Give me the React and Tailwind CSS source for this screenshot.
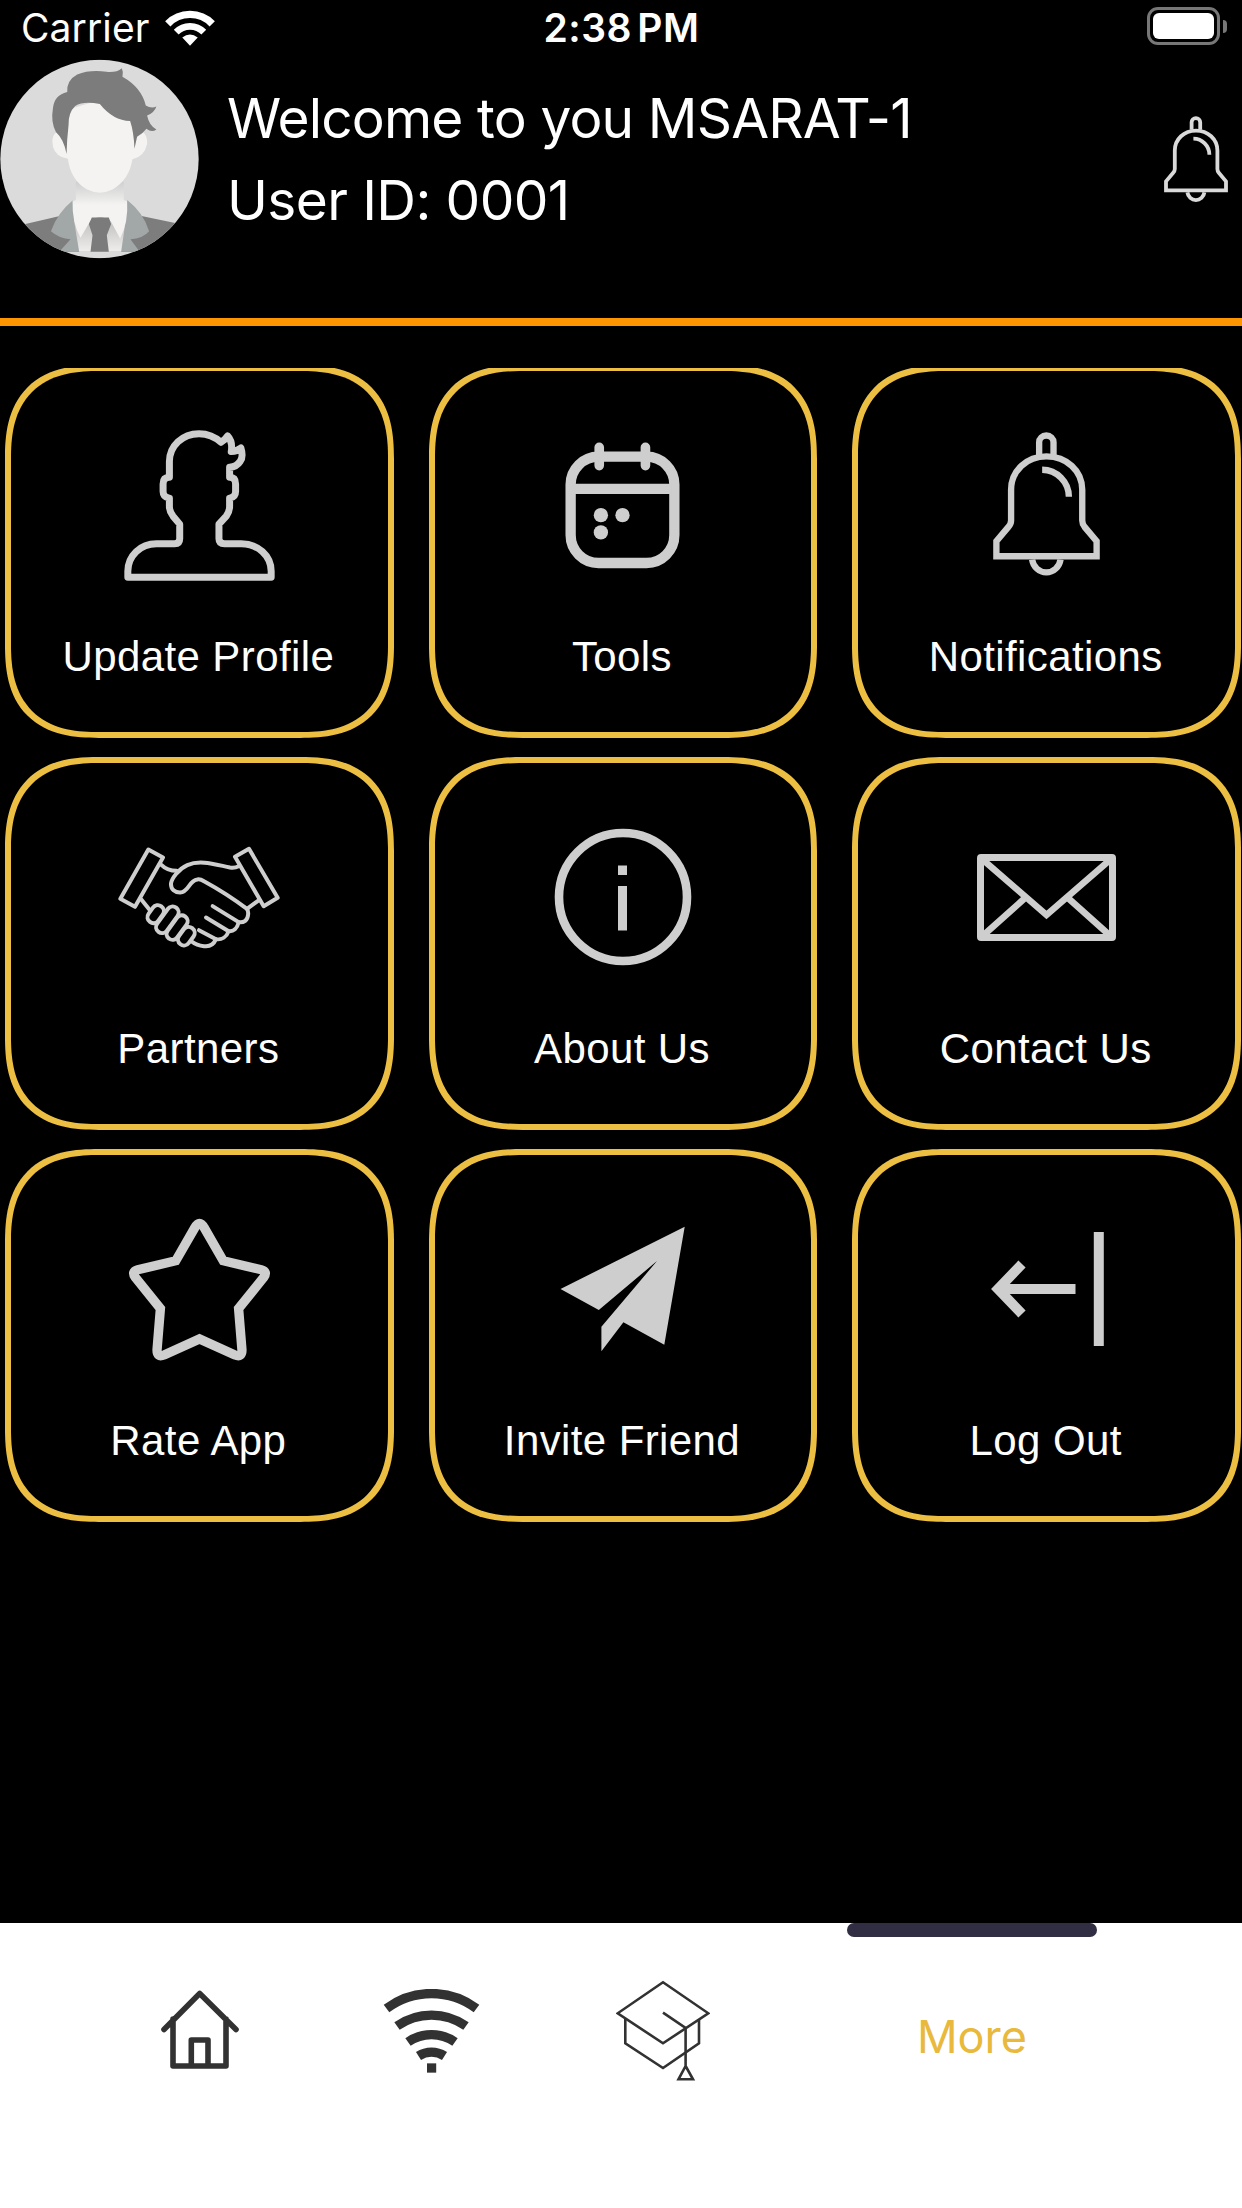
import React from "react";

const BellIcon = ({ className }) => (
  <svg viewBox="454 215 320 440" className={className} fill="none" stroke="currentColor" strokeWidth="19">
    <path d="M592 284V246a21 20 0 0 1 43 0v38" />
    <path d="M508 480V388C508 330 555 288 614 288S721 330 721 388v92q0 10 7 19l36 43v45H464v-45l36-43q8-9 8-19z" />
    <path d="M601 328c44 0 80 37 80 81" />
    <path d="M571 597a43 45 0 0 0 85 0" />
  </svg>
);

const ProfileIcon = () => (
  <svg viewBox="373 210 453 454" className="h-[151px] w-[151px]" fill="none" stroke="currentColor" strokeWidth="21" strokeLinejoin="round">
    <path d="M384 653V635C384 588 422 552 470 552H525Q540 552 540 537V493L520 469Q509 455 509 440V415Q490 412 490 395V372Q490 352 509 352V305C509 258 548 221 598 221C628 221 646 230 664 247Q676 240 684 228Q700 245 695 275Q712 274 724 264Q732 290 722 304Q711 321 690 322V352Q708 352 708 372V395Q708 412 690 415V440Q690 455 680 469L658 493V537Q658 552 675 552H725C775 552 815 588 815 635V653Z" />
  </svg>
);

const CalendarIcon = () => (
  <svg viewBox="436 244 344 382" className="h-[127px] w-[115px]" fill="none" stroke="currentColor" strokeWidth="31" strokeLinecap="round">
    <rect x="452" y="288" width="312" height="320" rx="84" />
    <path d="M460 385h296" strokeLinecap="butt" />
    <path d="M538 260v55M677 260v55" strokeWidth="29" />
    <g fill="currentColor" stroke="none">
      <circle cx="543" cy="464" r="21.5" />
      <circle cx="608" cy="464" r="21.5" />
      <circle cx="543" cy="516" r="21.5" />
    </g>
  </svg>
);

const HandshakeIcon = () => (
  <svg viewBox="354 288 486 308" className="h-[103px] w-[162px]" fill="none" stroke="currentColor" strokeWidth="12" strokeLinecap="round" strokeLinejoin="round">
    <path d="M445 298l44 24-84 148-44-24zM747 296l86 147-42 25-86-148z" />
    <path d="M484 344Q502 362 530 362M424 448L448 478M741 476L777 450" />
    <path d="M716 348Q705 354 690 352C645 343 600 328 562 345C535 357 515 385 513 400C512 418 525 427 540 427C568 425 565 392 592 388Q600 386 612 393Q680 430 741 476Q746 484 744 495C743 510 732 518 716 516C712 535 700 545 686 543C680 560 665 570 648 567C640 585 625 590 612 588Q590 586 575 574" />
    <path d="M716 516L638 468M686 543L618 502M648 567L597 540" />
    <rect x="449" y="463" width="36" height="58" rx="18" transform="rotate(36 467 492)" />
    <rect x="484" y="464" width="36" height="90" rx="18" transform="rotate(36 502 509)" />
    <rect x="514" y="491" width="35" height="82" rx="17" transform="rotate(36 531 532)" />
    <rect x="541" y="528" width="36" height="60" rx="18" transform="rotate(36 559 558)" />
  </svg>
);

const InfoIcon = () => (
  <svg viewBox="0 0 138 138" className="h-[138px] w-[138px]" fill="currentColor">
    <circle cx="69" cy="69" r="64" fill="none" stroke="currentColor" strokeWidth="8.6" />
    <rect x="64" y="37.5" width="9" height="9.5" />
    <rect x="64" y="58" width="9" height="44.5" />
  </svg>
);

const EnvelopeIcon = () => (
  <svg viewBox="0 0 139 87" className="h-[87px] w-[139px]" fill="none" stroke="currentColor" strokeWidth="7">
    <rect x="3.5" y="3.5" width="132" height="80" rx="0.5" />
    <path d="M5 5L69.5 61L134 5M5 82.5L48 44M134 82.5L91 44" strokeWidth="6.5" />
  </svg>
);

const StarIcon = () => (
  <svg viewBox="386 236 428 428" className="h-[143px] w-[143px]" fill="none" stroke="currentColor" strokeWidth="28">
    <path d="M586 265Q600 239 614 265L671 364L785 391Q805 396 792 414L717 507L727 630Q728 655 706 646L600 598L494 646Q472 655 473 630L483 507L408 414Q395 396 415 391L529 364Z" />
  </svg>
);

const PlaneIcon = () => (
  <svg viewBox="0 0 125 126" className="h-[126px] w-[125px]" fill="currentColor">
    <path d="M124.7 .7L.5 63l38.3 21L97 35 41.4 100.700v24.6l22-29 40.900 22.400z" />
  </svg>
);

const LogOutIcon = () => (
  <svg viewBox="0 0 114 114" className="h-[114px] w-[114px]" fill="none" stroke="currentColor" strokeWidth="10">
    <path d="M32 32L8 57l24 25M8 57h77.5M108.8 0v114" />
  </svg>
);

const tiles = [
  { label: "Update Profile", icon: <ProfileIcon /> },
  { label: "Tools", icon: <CalendarIcon /> },
  { label: "Notifications", icon: <BellIcon className="h-[147px] w-[107px]" /> },
  { label: "Partners", icon: <HandshakeIcon /> },
  { label: "About Us", icon: <InfoIcon /> },
  { label: "Contact Us", icon: <EnvelopeIcon /> },
  { label: "Rate App", icon: <StarIcon /> },
  { label: "Invite Friend", icon: <PlaneIcon /> },
  { label: "Log Out", icon: <LogOutIcon /> },
];

const StatusBar = () => (
  <div className="grid h-[59px] grid-cols-3 items-start pl-[21px] pr-[15px] pt-[4px] text-[39px] leading-[48px]">
    <div className="flex items-center gap-[15px]">
      <span className="tracking-[0.1px]">Carrier</span>
      <svg viewBox="495 25 148 110" className="mb-[2px] h-[37px] w-[50px]" fill="none" stroke="currentColor" strokeWidth="22">
        <path d="M503 69A92 92 0 0 1 635 69" />
        <path d="M528 94A57 57 0 0 1 610 94" strokeWidth="20" />
        <path d="M569 134L546 110Q569 92 592 110Z" fill="currentColor" stroke="none" />
      </svg>
    </div>
    <div className="-ml-[5px] text-center font-semibold tracking-[0.5px] [word-spacing:-5px]">2:38 PM</div>
    <div className="flex items-center justify-end gap-[3px] pt-[3px]">
      <div className="h-[38px] w-[73px] rounded-[11px] border-[3px] border-[#777] p-[3px]">
        <div className="h-full rounded-[6px] bg-white" />
      </div>
      <div className="h-[13px] w-[4px] rounded-r-full bg-[#777]" />
    </div>
  </div>
);

const Avatar = () => (
  <svg viewBox="0 178 598 598" className="h-[200px] w-[199px] shrink-0">
    <defs>
      <clipPath id="face">
        <circle cx="299" cy="477" r="298" />
      </clipPath>
      <linearGradient id="neck" x1="0" y1="545" x2="0" y2="615" gradientUnits="userSpaceOnUse">
        <stop offset="0" stopColor="#cfcfcf" />
        <stop offset="1" stopColor="#f4f3f1" />
      </linearGradient>
      <linearGradient id="shirt" x1="0" y1="680" x2="0" y2="756" gradientUnits="userSpaceOnUse">
        <stop offset="0" stopColor="#c9c9c8" />
        <stop offset="1" stopColor="#efeeed" />
      </linearGradient>
    </defs>
    <g clipPath="url(#face)">
      <rect y="178" width="598" height="598" fill="#dbdbdb" />
      <path d="M70 674L180 648H425L530 670V756H70Z" fill="#7d7d7d" />
      <path d="M218 602Q172 640 153 694Q178 716 212 718L178 756H420L392 718Q430 716 448 694Q432 640 384 602Z" fill="#a2a7a8" />
      <path d="M222 660L238 756H364L378 660Z" fill="url(#shirt)" />
      <path d="M228 545H372V600L382 602Q386 670 361 716L333 664Q300 640 271 664L242 714Q216 670 218 602L228 600Z" fill="url(#neck)" />
      <path d="M276 653H327L334 672L321 706L327 756H272L278 706L267 672Z" fill="#7b7b7b" />
      <path d="M172 396Q152 405 159 440Q168 472 204 476Q212 540 262 569Q300 588 338 569Q388 540 398 478Q434 470 442 432Q444 408 430 396L395 330L300 300L200 330Z" fill="#f4f3f1" />
      <path d="M200 462Q192 418 168 396Q152 365 159 325Q163 285 202 276Q200 240 232 223Q270 208 320 215Q350 218 366 204Q372 216 368 230Q425 262 438 316Q455 326 470 319Q464 338 442 346Q448 376 470 388Q456 398 440 386Q428 402 412 410L404 446Q402 395 391 363Q340 362 300 312Q250 302 226 318Q205 338 206 375Q201 420 200 462Z" fill="#7c7c7c" />
    </g>
  </svg>
);

const Header = () => (
  <header className="flex h-[259px] items-start pr-[14px]">
    <Avatar />
    <div className="ml-[28px] mt-[18px] grow text-[55px] leading-[82px]">
      <p className="tracking-[-0.85px]">Welcome to you MSARAT-1</p>
      <p className="tracking-[-0.6px]">User ID: 0001</p>
    </div>
    <BellIcon className="mt-[57px] h-[88px] w-[64px] text-[#dadada]" />
  </header>
);

const Tile = ({ label, icon }) => (
  <button className="flex h-[373px] flex-col items-center rounded-[94px] border-[6.5px] border-[#ecbf42] [corner-shape:superellipse(1.35)]">
    <span className="mt-[54px] flex h-[160px] items-center justify-center text-[#cecece]">{icon}</span>
    <span className="mt-[48px] whitespace-nowrap pr-[2px] font-['Liberation_Sans',sans-serif] text-[42px] leading-[48px] tracking-[0.4px]">
      {label}
    </span>
  </button>
);

const TabBar = () => (
  <nav className="flex h-[285px] bg-white pl-[84px] text-[#323232]">
    <button className="flex h-[213px] w-[232px] items-center justify-center">
      <svg viewBox="0 0 78 80" className="h-[80px] w-[78px]" fill="none" stroke="currentColor" strokeWidth="5.6" strokeLinecap="round" strokeLinejoin="round">
        <path d="M3 39.5L38.7 3.5L75 39.5M12 29V76H65V29M30.3 76V50H47V76" />
      </svg>
    </button>
    <button className="flex h-[215px] w-[231px] items-center justify-center">
      <svg viewBox="0 0 97 84" className="h-[84px] w-[97px]" fill="none" stroke="currentColor" strokeWidth="9.3">
        <path d="M3.5 19.5A75 75 0 0 1 93.5 19.5" />
        <path d="M14 37A60 60 0 0 1 83 37" />
        <path d="M25 53A41 41 0 0 1 72 53" />
        <path d="M35.5 67A24 24 0 0 1 61.5 67" />
        <path d="M44 79H53.2" />
      </svg>
    </button>
    <button className="flex h-[215px] w-[232px] items-center justify-center">
      <svg viewBox="0 0 94 101" className="h-[101px] w-[94px]" fill="none" stroke="currentColor" strokeWidth="2.6">
        <path d="M47 2.3L92.3 33.3L47 63.3L1.7 33.3Z" />
        <path d="M9.3 39V63.3L47 88L83 63.3V39" />
        <path d="M47 32.7L69.6 48V86L62.5 99.3H77L69.6 86" />
      </svg>
    </button>
    <button className="flex w-[386px] flex-col items-center">
      <span className="h-[14px] w-[250px] rounded-full bg-[#312d42]" />
      <span className="mt-[72px] text-[45px] leading-[56px] text-[#e8b93c]">More</span>
    </button>
  </nav>
);

function App() {
  return (
    <div className="flex h-[2208px] w-[1242px] flex-col overflow-hidden bg-black font-['Inter',sans-serif] text-white">
      <StatusBar />
      <Header />
      <div className="h-[8px] shrink-0 bg-[#ff9500]" />
      <main className="mt-[42px] grow overflow-hidden">
        <div className="-mt-[3px] grid grid-cols-3 gap-x-[35px] gap-y-[19px] pl-[5px] pr-px">
          {tiles.map((tile) => (
            <Tile key={tile.label} {...tile} />
          ))}
        </div>
      </main>
      <TabBar />
    </div>
  );
}

export default App;
